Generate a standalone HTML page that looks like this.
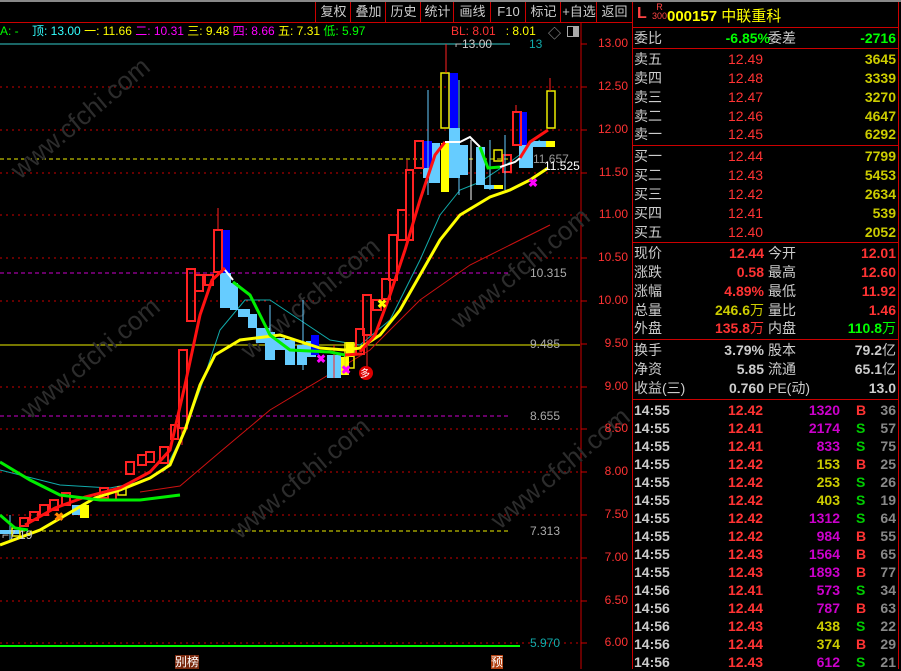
<!DOCTYPE html><html><head><meta charset="utf-8"><style>
body{margin:0;width:901px;height:669px;background:#000;overflow:hidden;position:relative;font-family:"Liberation Sans","Noto Sans CJK SC",sans-serif}
.a{position:absolute;white-space:nowrap}
.tb{position:absolute;top:2px;height:20px;border-left:1px solid #c00;color:#ccc;font-size:13px;line-height:20px;text-align:center}
.r{position:absolute;left:634px;width:262px;height:18px;font-size:14px;line-height:18px;white-space:nowrap}
.r>span{position:absolute;top:0;white-space:nowrap}
.n{font-weight:normal}
</style></head><body>
<div class="a" style="left:0;top:0;width:901px;height:2px;background:#888"></div>
<div class="tb" style="left:315px;width:35px">复权</div>
<div class="tb" style="left:350px;width:35px">叠加</div>
<div class="tb" style="left:385px;width:35px">历史</div>
<div class="tb" style="left:420px;width:33px">统计</div>
<div class="tb" style="left:453px;width:37px">画线</div>
<div class="tb" style="left:490px;width:35px">F10</div>
<div class="tb" style="left:525px;width:35px">标记</div>
<div class="tb" style="left:560px;width:36px">+自选</div>
<div class="tb" style="left:596px;width:35px">返回</div>
<div class="a" style="left:0;top:22px;width:632px;height:1px;background:#c00"></div>
<div class="a" style="left:0;top:23px;font-size:12px;line-height:16px">
<span style="color:#0f0">A: -</span>&nbsp;&nbsp;&nbsp;&nbsp;<span style="color:#3ff">顶: 13.00</span> <span style="color:#ff0">一: 11.66</span> <span style="color:#f0f">二: 10.31</span> <span style="color:#ff0">三: 9.48</span> <span style="color:#f0f">四: 8.66</span> <span style="color:#ff0">五: 7.31</span> <span style="color:#0f0">低: 5.97</span></div>
<div class="a" style="left:451px;top:24px;font-size:12px;line-height:14px"><span style="color:#f33">BL: 8.01</span>&nbsp;&nbsp;&nbsp;<span style="color:#ff0">: 8.01</span></div>
<div class="a" style="left:548px;top:23px;color:#aaa;font-size:13px">◇</div>
<div class="a" style="left:567px;top:26px;width:10px;height:9px;border:1px solid #aaa;background:linear-gradient(90deg,#000 50%,#aaa 50%)"></div>

<svg class="a" style="left:0;top:0" width="632" height="669">
<g stroke="#c00" stroke-dasharray="2 4" stroke-width="1">
<line x1="0" y1="87" x2="580" y2="87"/><line x1="0" y1="130" x2="580" y2="130"/><line x1="0" y1="173" x2="580" y2="173"/><line x1="0" y1="215" x2="580" y2="215"/><line x1="0" y1="258" x2="580" y2="258"/><line x1="0" y1="301" x2="580" y2="301"/><line x1="0" y1="387" x2="580" y2="387"/><line x1="0" y1="429" x2="580" y2="429"/><line x1="0" y1="472" x2="580" y2="472"/><line x1="0" y1="515" x2="580" y2="515"/><line x1="0" y1="558" x2="580" y2="558"/><line x1="0" y1="601" x2="580" y2="601"/><line x1="0" y1="643" x2="580" y2="643"/>
</g>
<line x1="0" y1="44" x2="510" y2="44" stroke="#3cc"/>
<line x1="0" y1="159" x2="510" y2="159" stroke="#ee0" stroke-dasharray="4 3"/>
<line x1="0" y1="273" x2="510" y2="273" stroke="#c0c" stroke-dasharray="4 3"/>
<line x1="0" y1="345" x2="580" y2="345" stroke="#ee0"/>
<line x1="0" y1="416" x2="510" y2="416" stroke="#c0c" stroke-dasharray="4 3"/>
<line x1="0" y1="531" x2="510" y2="531" stroke="#ee0" stroke-dasharray="4 3"/>
<line x1="0" y1="646" x2="520" y2="646" stroke="#0f0" stroke-width="2"/>
<line x1="581" y1="22" x2="581" y2="669" stroke="#c00"/>
<g stroke="#c00"><line x1="581" y1="44" x2="587" y2="44"/><line x1="581" y1="87" x2="587" y2="87"/><line x1="581" y1="130" x2="587" y2="130"/><line x1="581" y1="173" x2="587" y2="173"/><line x1="581" y1="215" x2="587" y2="215"/><line x1="581" y1="258" x2="587" y2="258"/><line x1="581" y1="301" x2="587" y2="301"/><line x1="581" y1="344" x2="587" y2="344"/><line x1="581" y1="387" x2="587" y2="387"/><line x1="581" y1="429" x2="587" y2="429"/><line x1="581" y1="472" x2="587" y2="472"/><line x1="581" y1="515" x2="587" y2="515"/><line x1="581" y1="558" x2="587" y2="558"/><line x1="581" y1="601" x2="587" y2="601"/><line x1="581" y1="643" x2="587" y2="643"/></g>
<g fill="#2c2c2c" font-size="26" font-family="Liberation Sans">
<text transform="translate(20,180) rotate(-40)">www.cfchi.com</text>
<text transform="translate(250,360) rotate(-40)">www.cfchi.com</text>
<text transform="translate(30,420) rotate(-40)">www.cfchi.com</text>
<text transform="translate(460,330) rotate(-40)">www.cfchi.com</text>
<text transform="translate(240,540) rotate(-40)">www.cfchi.com</text>
<text transform="translate(500,530) rotate(-40)">www.cfchi.com</text>
</g>
<polyline fill="none" stroke="#c11" stroke-width="1" points="140,492 180,486 220,452 270,410 320,380 370,350 420,300 470,265 510,245 550,225"/>
<polyline fill="none" stroke="#1aa" stroke-width="1" points="0,470 60,485 110,488 140,482 165,470 185,430 200,390 220,330 245,300 270,300 300,320 330,340 360,345 390,320 420,260 440,215 460,190 480,182 510,162 540,140"/>
<g fill="#6cf">
<rect x="220" y="273" width="11" height="35"/><rect x="230" y="283" width="8" height="27"/><rect x="238" y="309" width="12" height="8"/><rect x="248" y="314" width="9" height="14"/><rect x="256" y="328" width="14" height="15"/><rect x="265" y="332" width="10" height="28"/><rect x="275" y="338" width="10" height="12"/><rect x="285" y="340" width="10" height="25"/><rect x="297" y="345" width="10" height="20"/><rect x="306" y="341" width="10" height="16"/><rect x="327" y="355" width="14" height="23"/><rect x="72" y="505" width="9" height="10"/><rect x="0" y="530" width="20" height="4"/>
<rect x="423" y="143" width="17" height="35"/><rect x="429" y="143" width="11" height="40"/><rect x="449" y="128" width="11" height="50"/><rect x="456" y="145" width="12" height="30"/><rect x="476" y="147" width="9" height="38"/><rect x="484" y="185" width="10" height="4"/><rect x="519" y="145" width="14" height="23"/><rect x="530" y="141" width="16" height="6"/>
</g>
<g fill="#ff0"><rect x="80" y="505" width="9" height="13"/><rect x="441" y="143" width="8" height="49"/><rect x="494" y="185" width="9" height="4"/><rect x="546" y="141" width="9" height="6"/><rect x="341" y="357" width="8" height="18"/><rect x="346" y="342" width="8" height="15"/></g>
<g fill="#00f"><rect x="221" y="230" width="9" height="43"/><rect x="449" y="73" width="9" height="55"/><rect x="423" y="141" width="9" height="27"/><rect x="519" y="112" width="8" height="33"/><rect x="311" y="335" width="8" height="20"/></g>
<g fill="none" stroke="#f22" stroke-width="2">
<rect x="179" y="350" width="8" height="78"/><rect x="171" y="425" width="7" height="14"/><rect x="187" y="269" width="8" height="52"/><rect x="195" y="275" width="8" height="16"/><rect x="205" y="275" width="8" height="10"/><rect x="214" y="230" width="8" height="42"/>
<rect x="356" y="329" width="8" height="25"/><rect x="363" y="295" width="8" height="40"/><rect x="373" y="300" width="8" height="10"/><rect x="382" y="279" width="8" height="20"/><rect x="389" y="235" width="8" height="45"/><rect x="398" y="210" width="8" height="30"/><rect x="406" y="170" width="7" height="70"/><rect x="415" y="141" width="8" height="27"/><rect x="503" y="155" width="8" height="17"/><rect x="513" y="112" width="8" height="33"/>
<rect x="126" y="462" width="8" height="12"/><rect x="138" y="455" width="8" height="10"/><rect x="146" y="452" width="8" height="10"/><rect x="160" y="447" width="8" height="16"/><rect x="20" y="518" width="8" height="8"/><rect x="30" y="512" width="8" height="8"/><rect x="40" y="505" width="8" height="10"/><rect x="50" y="500" width="8" height="10"/><rect x="62" y="493" width="8" height="12"/><rect x="100" y="488" width="8" height="10"/><rect x="108" y="492" width="8" height="8"/>
</g>
<g fill="none" stroke="#ee0" stroke-width="1.5"><rect x="441" y="73" width="8" height="55"/><rect x="547" y="91" width="8" height="37"/><rect x="494" y="150" width="8" height="11"/><rect x="345" y="343" width="9" height="25"/><rect x="12" y="528" width="8" height="8"/><rect x="118" y="487" width="8" height="8"/></g>
<g stroke="#f22" stroke-width="1"><line x1="218" y1="208" x2="218" y2="230"/><line x1="446" y1="44" x2="446" y2="73"/><line x1="550" y1="78" x2="550" y2="91"/><line x1="516" y1="105" x2="516" y2="112"/><line x1="407" y1="160" x2="407" y2="170"/><line x1="182" y1="428" x2="182" y2="445"/><line x1="367" y1="335" x2="367" y2="378"/><line x1="334" y1="378" x2="334" y2="345"/></g>
<g stroke="#6cf" stroke-width="1"><line x1="428" y1="90" x2="428" y2="195"/><line x1="459" y1="80" x2="459" y2="195"/><line x1="490" y1="140" x2="490" y2="190"/><line x1="505" y1="135" x2="505" y2="190"/><line x1="303" y1="300" x2="303" y2="370"/><line x1="270" y1="305" x2="270" y2="340"/><line x1="10" y1="515" x2="10" y2="540"/></g>
<line x1="471" y1="140" x2="471" y2="200" stroke="#fff"/>
<polyline fill="none" stroke="#ff0" stroke-width="3" points="0,545 40,530 95,498 120,490 150,478 170,465 185,430 200,385 215,355 240,340 280,335 320,348 345,350 360,348 380,335 400,310 420,275 440,240 460,215 490,197 510,190 530,180 548,168"/>
<polyline fill="none" stroke="#f11" stroke-width="3" points="25,525 55,508 85,497 120,488 150,472 170,450 185,385 200,315 212,280 225,268"/>
<polyline fill="none" stroke="#f11" stroke-width="3" points="360,352 375,335 390,295 405,250 420,200 435,155 445,142"/>
<polyline fill="none" stroke="#0e0" stroke-width="3" points="0,462 30,480 60,495 100,500 140,500 180,495"/>
<polyline fill="none" stroke="#0e0" stroke-width="3" points="0,515 15,528 28,530"/>
<polyline fill="none" stroke="#fff" stroke-width="2" points="225,270 233,280"/>
<polyline fill="none" stroke="#0e0" stroke-width="3" points="233,282 250,295 260,315 270,335 290,350 330,352 345,355"/>
<polyline fill="none" stroke="#f11" stroke-width="3" points="345,355 360,354"/>
<polyline fill="none" stroke="#fff" stroke-width="2" points="445,142 460,142 470,137 480,147"/>
<polyline fill="none" stroke="#0e0" stroke-width="3" points="480,147 488,168 500,167"/>
<polyline fill="none" stroke="#fff" stroke-width="2" points="500,167 515,162 520,158"/>
<polyline fill="none" stroke="#f11" stroke-width="3" points="520,158 530,142 548,130"/>
<g font-size="12" font-weight="bold"><text x="316" y="363" fill="#f0f">✖</text><text x="341" y="374" fill="#f0f">✖</text><text x="528" y="187" fill="#f0f">✖</text><text x="377" y="308" fill="#ff0">✖</text><text x="54" y="521" fill="#f80">✖</text></g>
<circle cx="366" cy="373" r="7" fill="#d00"/><text x="360" y="377" font-size="10" fill="#fff">多</text>
</svg>
<div class="a" style="left:455px;top:37px;color:#ccc;font-size:12px">⌐13.00</div>
<div class="a" style="left:529px;top:37px;color:#1aa;font-size:12px">13</div>
<div class="a" style="left:533px;top:152px;color:#999;font-size:12px">11.657</div>
<div class="a" style="left:544px;top:159px;color:#fff;font-size:12px">11.525</div>
<div class="a" style="left:530px;top:266px;color:#aaa;font-size:12px">10.315</div>
<div class="a" style="left:530px;top:337px;color:#aaa;font-size:12px">9.485</div>
<div class="a" style="left:530px;top:409px;color:#aaa;font-size:12px">8.655</div>
<div class="a" style="left:530px;top:524px;color:#aaa;font-size:12px">7.313</div>
<div class="a" style="left:530px;top:636px;color:#1aa;font-size:12px">5.970</div>
<div class="a" style="left:2px;top:528px;color:#ccc;font-size:12px">⌐7.19</div>
<div class="a" style="left:175px;top:655px;color:#fff;background:#7a2a10;font-size:12px;line-height:14px">别榜</div>
<div class="a" style="left:491px;top:655px;color:#fff;background:#b04010;font-size:12px;line-height:14px">预</div>
<div class="a" style="left:596px;top:0;width:32px;color:#f33;font-size:12px;line-height:13px;text-align:right">
<div style="position:absolute;right:0;top:37px">13.00</div><div style="position:absolute;right:0;top:80px">12.50</div><div style="position:absolute;right:0;top:123px">12.00</div><div style="position:absolute;right:0;top:166px">11.50</div><div style="position:absolute;right:0;top:208px">11.00</div><div style="position:absolute;right:0;top:251px">10.50</div><div style="position:absolute;right:0;top:294px">10.00</div><div style="position:absolute;right:0;top:337px">9.50</div><div style="position:absolute;right:0;top:380px">9.00</div><div style="position:absolute;right:0;top:422px">8.50</div><div style="position:absolute;right:0;top:465px">8.00</div><div style="position:absolute;right:0;top:508px">7.50</div><div style="position:absolute;right:0;top:551px">7.00</div><div style="position:absolute;right:0;top:594px">6.50</div><div style="position:absolute;right:0;top:636px">6.00</div></div>

<div class="a" style="left:632px;top:2px;width:1px;height:667px;background:#c00"></div>
<div class="a" style="left:898px;top:2px;width:1px;height:667px;background:#c00"></div>
<div class="a" style="left:632px;top:27px;width:267px;height:1px;background:#c00"></div>
<div class="a" style="left:632px;top:48px;width:267px;height:1px;background:#c00"></div>
<div class="a" style="left:632px;top:145px;width:267px;height:1px;background:#c00"></div>
<div class="a" style="left:632px;top:242px;width:267px;height:1px;background:#c00"></div>
<div class="a" style="left:632px;top:339px;width:267px;height:1px;background:#c00"></div>
<div class="a" style="left:632px;top:399px;width:267px;height:1px;background:#c00"></div>
<div class="a" style="left:637px;top:5px;color:#f44;font-size:16px;font-weight:bold">L</div>
<div class="a" style="left:652px;top:3px;color:#f44;font-size:9px;line-height:9px;text-align:center">R<br>300</div>
<div class="a" style="left:667px;top:5px;color:#ff0;font-size:15px;font-weight:bold">000157 <span style="font-weight:normal">中联重科</span></div>
<div class="r" style="top:29px"><span style="left:0;color:#ccc">委比</span><span style="left:74px;width:62px;text-align:right;color:#0f0;font-weight:bold">-6.85%</span><span style="left:134px;color:#ccc">委差</span><span style="right:0;color:#0f0;font-weight:bold">-2716</span></div>

<div class="r" style="top:50px"><span style="left:0;color:#ccc">卖五</span><span style="left:94px;color:#f33">12.49</span><span style="right:0;color:#cc0;font-weight:bold">3645</span></div>
<div class="r" style="top:69px"><span style="left:0;color:#ccc">卖四</span><span style="left:94px;color:#f33">12.48</span><span style="right:0;color:#cc0;font-weight:bold">3339</span></div>
<div class="r" style="top:88px"><span style="left:0;color:#ccc">卖三</span><span style="left:94px;color:#f33">12.47</span><span style="right:0;color:#cc0;font-weight:bold">3270</span></div>
<div class="r" style="top:107px"><span style="left:0;color:#ccc">卖二</span><span style="left:94px;color:#f33">12.46</span><span style="right:0;color:#cc0;font-weight:bold">4647</span></div>
<div class="r" style="top:125px"><span style="left:0;color:#ccc">卖一</span><span style="left:94px;color:#f33">12.45</span><span style="right:0;color:#cc0;font-weight:bold">6292</span></div>
<div class="r" style="top:147px"><span style="left:0;color:#ccc">买一</span><span style="left:94px;color:#f33">12.44</span><span style="right:0;color:#cc0;font-weight:bold">7799</span></div>
<div class="r" style="top:166px"><span style="left:0;color:#ccc">买二</span><span style="left:94px;color:#f33">12.43</span><span style="right:0;color:#cc0;font-weight:bold">5453</span></div>
<div class="r" style="top:185px"><span style="left:0;color:#ccc">买三</span><span style="left:94px;color:#f33">12.42</span><span style="right:0;color:#cc0;font-weight:bold">2634</span></div>
<div class="r" style="top:204px"><span style="left:0;color:#ccc">买四</span><span style="left:94px;color:#f33">12.41</span><span style="right:0;color:#cc0;font-weight:bold">539</span></div>
<div class="r" style="top:223px"><span style="left:0;color:#ccc">买五</span><span style="left:94px;color:#f33">12.40</span><span style="right:0;color:#cc0;font-weight:bold">2052</span></div>

<div class="r" style="top:244px"><span style="left:0;color:#ccc">现价</span><span style="right:132px;color:#f33;font-weight:bold">12.44</span><span style="left:134px;color:#ccc">今开</span><span style="right:0;color:#f33;font-weight:bold">12.01</span></div>
<div class="r" style="top:263px"><span style="left:0;color:#ccc">涨跌</span><span style="right:132px;color:#f33;font-weight:bold">0.58</span><span style="left:134px;color:#ccc">最高</span><span style="right:0;color:#f33;font-weight:bold">12.60</span></div>
<div class="r" style="top:282px"><span style="left:0;color:#ccc">涨幅</span><span style="right:132px;color:#f33;font-weight:bold">4.89%</span><span style="left:134px;color:#ccc">最低</span><span style="right:0;color:#f33;font-weight:bold">11.92</span></div>
<div class="r" style="top:301px"><span style="left:0;color:#ccc">总量</span><span style="right:132px;color:#cc0;font-weight:bold">246.6<span class="n">万</span></span><span style="left:134px;color:#ccc">量比</span><span style="right:0;color:#f33;font-weight:bold">1.46</span></div>
<div class="r" style="top:319px"><span style="left:0;color:#ccc">外盘</span><span style="right:132px;color:#f33;font-weight:bold">135.8<span class="n">万</span></span><span style="left:134px;color:#ccc">内盘</span><span style="right:0;color:#0f0;font-weight:bold">110.8<span class="n">万</span></span></div>
<div class="r" style="top:341px"><span style="left:0;color:#ccc">换手</span><span style="right:132px;color:#ccc;font-weight:bold">3.79%</span><span style="left:134px;color:#ccc">股本</span><span style="right:0;color:#ccc;font-weight:bold">79.2<span class="n">亿</span></span></div>
<div class="r" style="top:360px"><span style="left:0;color:#ccc">净资</span><span style="right:132px;color:#ccc;font-weight:bold">5.85</span><span style="left:134px;color:#ccc">流通</span><span style="right:0;color:#ccc;font-weight:bold">65.1<span class="n">亿</span></span></div>
<div class="r" style="top:379px"><span style="left:0;color:#ccc">收益(三)</span><span style="right:132px;color:#ccc;font-weight:bold">0.760</span><span style="left:134px;color:#ccc">PE(动)</span><span style="right:0;color:#ccc;font-weight:bold">13.0</span></div>

<div id="t"></div>
<script>
var d=[["14:55","12.42","1320","B","36",1],["14:55","12.41","2174","S","57",1],["14:55","12.41","833","S","75",1],["14:55","12.42","153","B","25",0],["14:55","12.42","253","S","26",0],["14:55","12.42","403","S","19",0],["14:55","12.42","1312","S","64",1],["14:55","12.42","984","B","55",1],["14:55","12.43","1564","B","65",1],["14:55","12.43","1893","B","77",1],["14:56","12.41","573","S","34",1],["14:56","12.44","787","B","63",1],["14:56","12.43","438","S","22",0],["14:56","12.44","374","B","29",0],["14:56","12.43","612","S","21",1]];
var h="";d.forEach(function(r,i){h+='<div class="r" style="top:'+(401+i*18)+'px;font-weight:bold"><span style="left:0;color:#ccc">'+r[0]+'</span><span style="left:94px;color:#f33">'+r[1]+'</span><span style="right:56px;color:'+(r[5]?'#c0c':'#cc0')+'">'+r[2]+'</span><span style="left:222px;color:'+(r[3]=="B"?'#f33':'#0c0')+'">'+r[3]+'</span><span style="right:0;color:#888">'+r[4]+'</span></div>'});document.getElementById("t").innerHTML=h;
</script>
</body></html>
